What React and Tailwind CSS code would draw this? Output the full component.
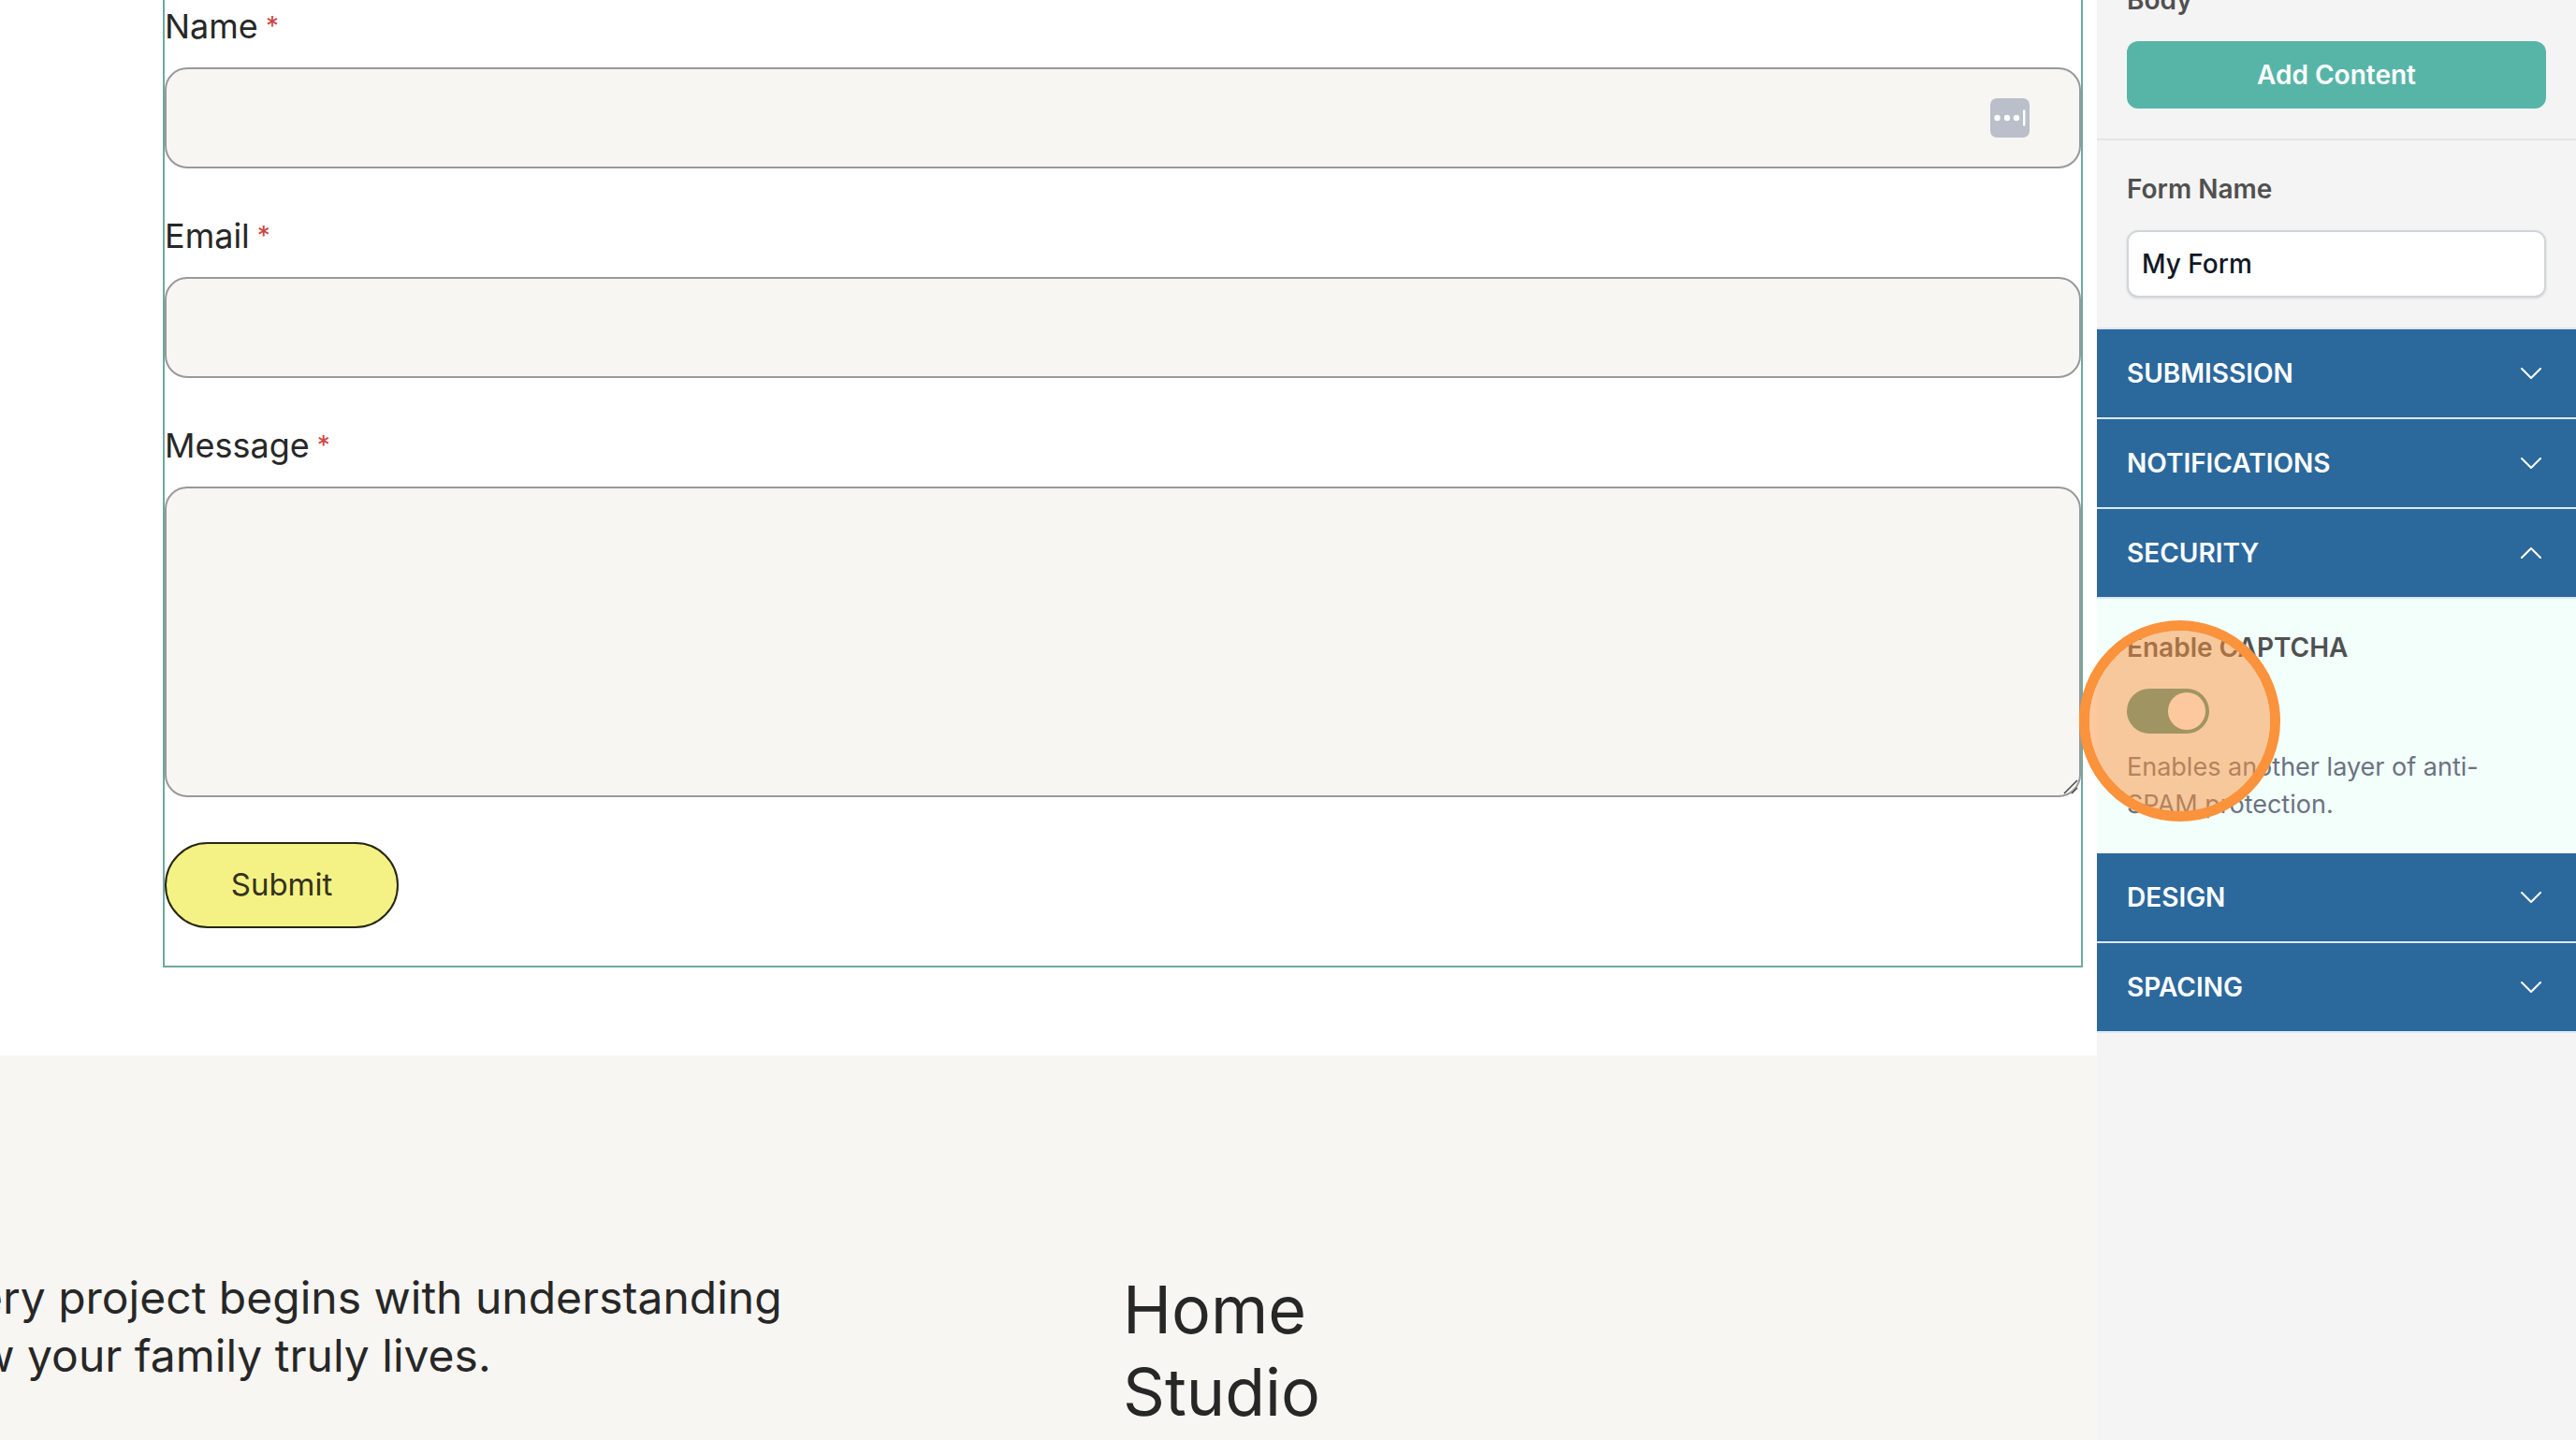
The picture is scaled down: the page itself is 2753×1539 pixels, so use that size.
import { useState } from "react";
import { ChevronDown, ChevronUp } from "lucide-react";

// Fields shown inside the form block on the canvas
const fields = [
  { id: "name", label: "Name", type: "text" },
  { id: "email", label: "Email", type: "email" },
  { id: "message", label: "Message", type: "textarea" },
];

const PasswordBadge = () => (
  <svg
    viewBox="0 0 42 42"
    className="absolute right-[55px] top-[33px] size-[42px]"
    aria-hidden="true"
  >
    <rect width="42" height="42" rx="7" fill="#babfca" />
    <circle cx="7.5" cy="21" r="3.2" fill="#fff" />
    <circle cx="18" cy="21" r="3.2" fill="#fff" />
    <circle cx="28" cy="21" r="3.2" fill="#fff" />
    <rect x="35" y="12.5" width="2.4" height="17" fill="#fff" />
  </svg>
);

const ResizeGrip = () => (
  <svg
    viewBox="0 0 16 16"
    className="pointer-events-none absolute bottom-[3px] right-[3px] size-4"
    aria-hidden="true"
  >
    <path d="M1 15L15 1M9 15L15 9" stroke="#4a4a4a" strokeWidth="1.5" fill="none" />
  </svg>
);

const Field = ({ id, label, type }) => (
  <div>
    <label htmlFor={id} className="block text-[36px] leading-[56px]">
      {label}
      <span className="ml-2 align-[3px] text-[28px] leading-none text-[#cd4643]">*</span>
    </label>
    <div className="relative mt-4">
      {type === "textarea" ? (
        <textarea
          id={id}
          className="block h-[332px] w-full resize-none rounded-3xl border-2 border-[#999999] bg-[#f7f6f2] p-6 text-[36px] outline-none"
        />
      ) : (
        <input
          id={id}
          type={type}
          className="block h-[108px] w-full rounded-3xl border-2 border-[#999999] bg-[#f7f6f2] px-6 text-[36px] outline-none"
        />
      )}
      {id === "name" && <PasswordBadge />}
      {type === "textarea" && <ResizeGrip />}
    </div>
  </div>
);

const AccordionHeader = ({ title, open, onClick }) => {
  const Chevron = open ? ChevronUp : ChevronDown;
  return (
    <button
      type="button"
      onClick={onClick}
      aria-expanded={open}
      className="flex h-24 w-full items-center justify-between border-b-2 border-[#dce9f3] bg-[#2b689c] pl-8 pr-7 text-[28px] font-semibold text-white"
    >
      {title}
      <Chevron className="size-10" strokeWidth={1.25} />
    </button>
  );
};

const Settings = () => {
  const [open, setOpen] = useState("SECURITY"); // Open accordion section
  const [captcha, setCaptcha] = useState(true); // CAPTCHA toggle

  const toggle = (title) => setOpen(open === title ? "" : title);

  return (
    <aside className="relative w-[512px] shrink-0 bg-[#f4f4f4] text-[28px] leading-10 text-[#505050]">
      {/* Scrolled slightly, so the first heading is cut off */}
      <div className="-mt-5 border-b-2 border-[#e5e5e5] px-8 pb-8">
        <h2 className="font-semibold">Body</h2>
        <button
          type="button"
          className="mt-6 h-[72px] w-full rounded-xl bg-[#57b5a7] font-semibold text-white"
        >
          Add Content
        </button>
      </div>

      <div className="border-b-2 border-[#dce5ec] px-8 py-8">
        <label htmlFor="form-name" className="block font-semibold">
          Form Name
        </label>
        <input
          id="form-name"
          type="text"
          defaultValue="My Form"
          className="mt-6 block h-[72px] w-full rounded-xl border-2 border-[#d1d5db] bg-white px-3.5 font-medium text-[#111827] shadow-sm outline-none"
        />
      </div>

      {["SUBMISSION", "NOTIFICATIONS"].map((title) => (
        <AccordionHeader key={title} title={title} open={open === title} onClick={() => toggle(title)} />
      ))}
      <AccordionHeader title="SECURITY" open={open === "SECURITY"} onClick={() => toggle("SECURITY")} />
      {open === "SECURITY" && (
        <div className="bg-[#f2fffb] px-8 py-8">
          <label htmlFor="captcha" className="block font-semibold">
            Enable CAPTCHA
          </label>
          <div className="relative mt-6 h-12 w-[88px]">
            <input
              id="captcha"
              type="checkbox"
              role="switch"
              checked={captcha}
              onChange={(e) => setCaptcha(e.target.checked)}
              className="peer block h-12 w-[88px] appearance-none rounded-full bg-gray-300 checked:bg-[#459888]"
            />
            <span className="pointer-events-none absolute left-1 top-1 size-10 rounded-full bg-white peer-checked:left-11" />
            {/* Click highlight */}
            <span className="pointer-events-none absolute -left-[51px] -top-[73px] z-10 size-[215px] rounded-full border-[11px] border-[#fb923c] bg-[#fb923c]/50 bg-clip-padding" />
          </div>
          <p className="mt-4 text-[27px] text-[#6b7280]">
            Enables another layer of anti-SPAM protection.
          </p>
        </div>
      )}
      {["DESIGN", "SPACING"].map((title) => (
        <AccordionHeader key={title} title={title} open={open === title} onClick={() => toggle(title)} />
      ))}
    </aside>
  );
};

export default function App() {
  return (
    <div className="flex h-screen overflow-hidden bg-white font-['Inter',sans-serif] text-[#272727]">
      <main className="flex min-w-0 flex-1 flex-col overflow-hidden">
        <section className="pb-[94px] pl-[174px] pr-[15px]">
          <form
            onSubmit={(e) => e.preventDefault()}
            className="flex flex-col gap-11 border-2 border-t-0 border-[#6fa9a2] pb-10"
          >
            {fields.map((field) => (
              <Field key={field.id} {...field} />
            ))}
            <button
              type="submit"
              className="mt-1 h-[92px] w-[250px] rounded-full border-2 border-[#272715] bg-[#f5f285] text-[33px] text-[#33321c]"
            >
              Submit
            </button>
          </form>
        </section>

        <footer className="flex flex-1 bg-[#f7f6f2] pt-[228px]">
          <div className="w-[1200px] shrink-0">
            <p className="-ml-20 w-[960px] text-[48px] leading-[62px]">
              Every project begins with understanding
              <br />
              how your family truly lives.
            </p>
          </div>
          <nav className="flex flex-col text-[70px] leading-[88px]">
            <a href="#home">Home</a>
            <a href="#studio">Studio</a>
          </nav>
        </footer>
      </main>

      <Settings />
    </div>
  );
}
